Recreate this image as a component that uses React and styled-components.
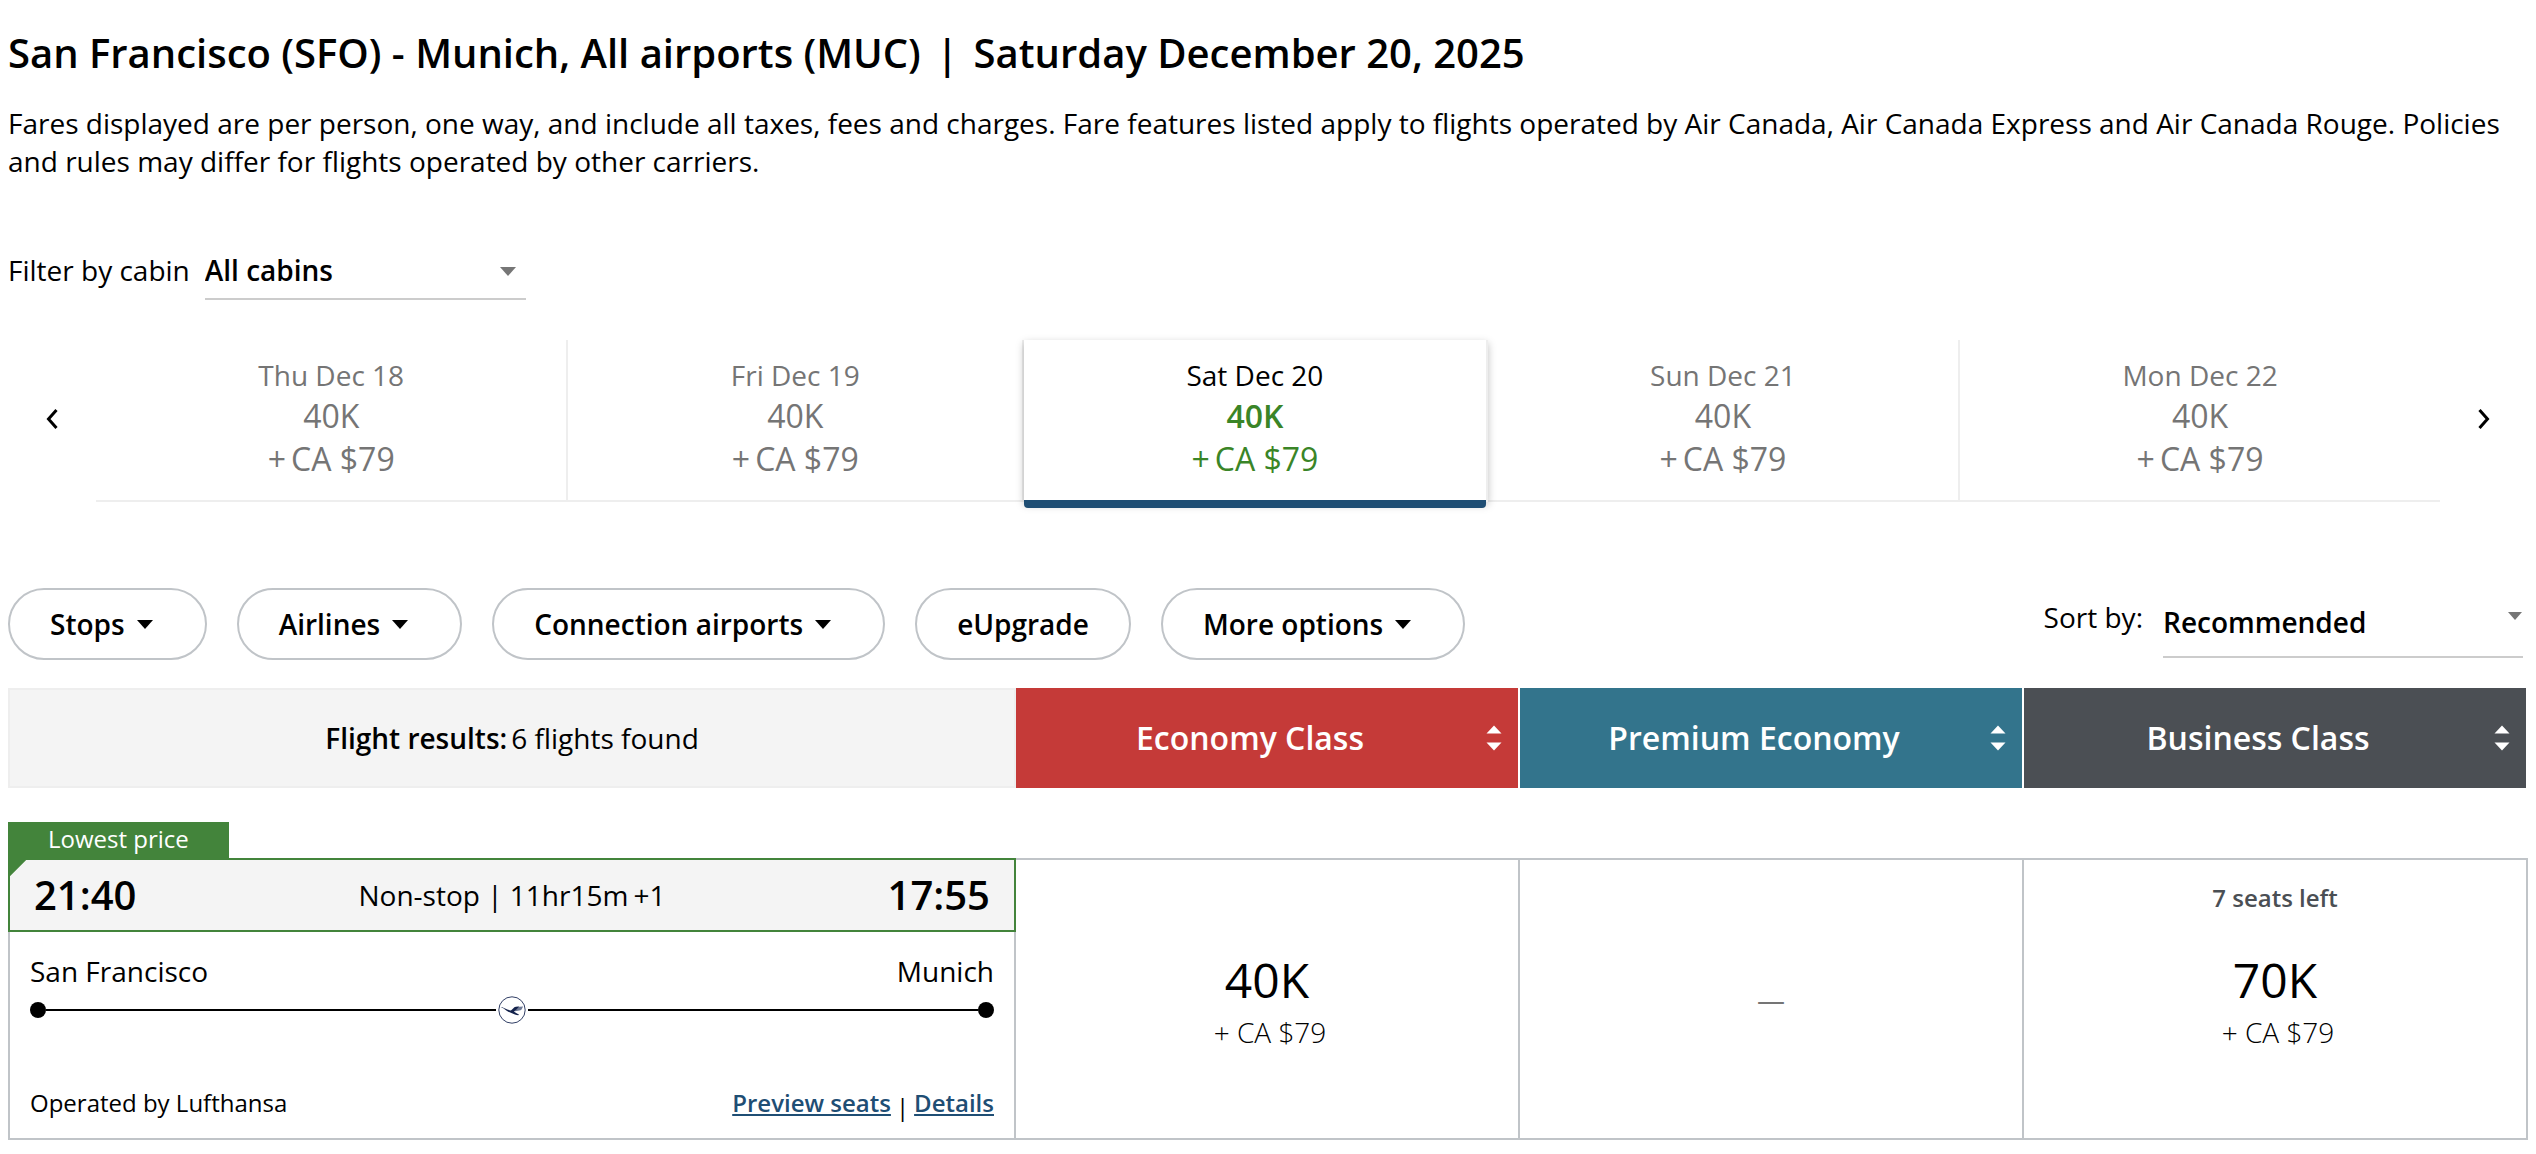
import { useState } from "react";
import styled, { createGlobalStyle } from "styled-components";

const dates = [
  { id: 18, label: "Thu Dec 18", points: "40K", cash: "CA $79" },
  { id: 19, label: "Fri Dec 19", points: "40K", cash: "CA $79" },
  { id: 20, label: "Sat Dec 20", points: "40K", cash: "CA $79" },
  { id: 21, label: "Sun Dec 21", points: "40K", cash: "CA $79" },
  { id: 22, label: "Mon Dec 22", points: "40K", cash: "CA $79" },
];

const filters = [
  { name: "Stops", menu: true },
  { name: "Airlines", menu: true },
  { name: "Connection airports", menu: true },
  { name: "eUpgrade", menu: false },
  { name: "More options", menu: true },
];

const cabins = [
  { name: "Economy Class", color: "#c53a38" },
  { name: "Premium Economy", color: "#33748c" },
  { name: "Business Class", color: "#4b4f54" },
];

const fares = [
  { cabin: "Economy Class", points: "40K", cash: "+ CA $79" },
  { cabin: "Premium Economy" },
  { cabin: "Business Class", points: "70K", cash: "+ CA $79", note: "7 seats left" },
];

const Caret = ({ color = "#000", width = 16, height = 9 }) => (
  <svg width={width} height={height} viewBox="0 0 16 8" preserveAspectRatio="none" aria-hidden="true">
    <path d="M0 0h16L8 8z" fill={color} />
  </svg>
);

const Chevron = ({ next }) => (
  <svg width="14" height="22" viewBox="0 0 14 22" aria-hidden="true">
    <path
      d={next ? "M2.500 2l8 9-8 9" : "M11.500 2l-8 9 8 9"}
      fill="none"
      stroke="#000"
      strokeWidth="3"
    />
  </svg>
);

const SortArrows = () => (
  <svg width="16" height="26" viewBox="0 0 16 26" aria-hidden="true">
    <path d="M0.500 8.500L8 0.500l7.500 8zM0.500 17.500L8 25.500l7.500-8z" fill="#fff" />
  </svg>
);

const CraneLogo = () => (
  <svg width="28" height="28" viewBox="0 0 28 28" role="img" aria-label="Lufthansa">
    <circle cx="14" cy="14" r="13.2" fill="#fff" stroke="#1b2a55" strokeWidth=".9" />
    <path d="M17.800 10.900l7.400-.4-.9 1.600-.5 1.100-1.200 1-5.300 1.100-2.500.3z" fill="#6f7a96" />
    <path
      d="M2.700 11.200c1.600-.2 2.700.4 3.800 1 2.200 1 4.300 2 6.400 2.300 1.700-1 2.700-3.400 4.900-3.800l3.400-.2-2.800 3-2.600 2.100c1.600 1 3 2.200 5 2.700l-.4.900c-2.400-.2-4.600-1.500-7-2.300-3-.4-5.300-2.800-8.100-4.600-.8-.5-1.600-.9-2.600-1.100z"
      fill="#14224b"
    />
  </svg>
);

const App = () => {
  const [cabin, setCabin] = useState("All cabins");
  const [sort, setSort] = useState("Recommended");
  const [selected, setSelected] = useState(20);

  return (
    <Page>
      <GlobalStyle />
      <Title>
        San Francisco (SFO) - Munich, All airports (MUC) <Divider>|</Divider> Saturday December 20, 2025
      </Title>
      <Notice>
        Fares displayed are per person, one way, and include all taxes, fees and charges. Fare features listed apply to
        flights operated by Air Canada, Air Canada Express and Air Canada Rouge. Policies and rules may differ for
        flights operated by other carriers.
      </Notice>

      <CabinFilter>
        <Label htmlFor="cabin">Filter by cabin</Label>
        <SelectBox $width="321px">
          <Select id="cabin" value={cabin} onChange={e => setCabin(e.target.value)}>
            <option>All cabins</option>
            <option>Economy</option>
            <option>Premium Economy</option>
            <option>Business</option>
          </Select>
          <SelectCaret $right="10px" $bottom="8px">
            <Caret color="#767676" />
          </SelectCaret>
        </SelectBox>
      </CabinFilter>

      <DateBar>
        <ArrowButton aria-label="Previous dates">
          <Chevron />
        </ArrowButton>
        <DateList>
          {dates.map(date => (
            <DateItem key={date.id} $active={date.id === selected}>
              <DateTab $active={date.id === selected} onClick={() => setSelected(date.id)}>
                <DateLabel>{date.label}</DateLabel>
                <DatePoints>{date.points}</DatePoints>
                <DateCash>
                  <span>+</span>
                  <span>{date.cash}</span>
                </DateCash>
              </DateTab>
            </DateItem>
          ))}
        </DateList>
        <ArrowButton aria-label="Next dates">
          <Chevron next />
        </ArrowButton>
      </DateBar>

      <Toolbar>
        <Pills>
          {filters.map(({ name, menu }) => (
            <Pill key={name}>
              {name}
              {menu && (
                <PillCaret>
                  <Caret />
                </PillCaret>
              )}
            </Pill>
          ))}
        </Pills>
        <SortBy>
          <SortLabel htmlFor="sort">Sort by:</SortLabel>
          <SelectBox $width="360px">
            <SortSelect id="sort" value={sort} onChange={e => setSort(e.target.value)}>
              <option>Recommended</option>
              <option>Lowest price</option>
              <option>Duration</option>
            </SortSelect>
            <SelectCaret $right="1px" $bottom="15px">
              <Caret color="#767676" width={14} height={8} />
            </SelectCaret>
          </SelectBox>
        </SortBy>
      </Toolbar>

      <ResultsHeader>
        <ResultsCount>
          <strong>Flight results:</strong>
          <span>6 flights found</span>
        </ResultsCount>
        {cabins.map(({ name, color }) => (
          <CabinHeader key={name} $color={color}>
            <CabinName>{name}</CabinName>
            <SortArrows />
          </CabinHeader>
        ))}
      </ResultsHeader>

      <Badge>Lowest price</Badge>
      <Flight>
        <Itinerary>
          <Times>
            <Time>21:40</Time>
            <Duration>
              <span>Non-stop | 11hr15m</span>
              <span>+1</span>
            </Duration>
            <Time>17:55</Time>
          </Times>
          <Route>
            <Cities>
              <span>San Francisco</span>
              <span>Munich</span>
            </Cities>
            <Track>
              <Dot />
              <Line />
              <LogoSlot>
                <CraneLogo />
              </LogoSlot>
              <Line />
              <Dot />
            </Track>
            <Operated>
              <span>Operated by Lufthansa</span>
              <Links>
                <Link href="#seats">Preview seats</Link>
                <span>|</span>
                <Link href="#details">Details</Link>
              </Links>
            </Operated>
          </Route>
        </Itinerary>
        {fares.map(fare => (
          <Fare key={fare.cabin} aria-label={fare.cabin} disabled={!fare.points}>
            <SeatsLeft>{fare.note}</SeatsLeft>
            {fare.points ? (
              <Price>
                <Points>{fare.points}</Points>
                <Cash>{fare.cash}</Cash>
              </Price>
            ) : (
              <NoFare>—</NoFare>
            )}
          </Fare>
        ))}
      </Flight>
    </Page>
  );
};

export default App;

const GlobalStyle = createGlobalStyle`
  * {
    box-sizing: border-box;
  }
  body {
    margin: 0;
    background: #fff;
    color: #000;
    font-family: "Open Sans", "Noto Sans", sans-serif;
    font-size: 28px;
    line-height: 38px;
  }
  button, select {
    margin: 0;
    padding: 0;
    border: 0;
    background: none;
    color: inherit;
    font: inherit;
  }
  button {
    cursor: pointer;
  }
  svg {
    display: block;
    flex: none;
  }
`;

const Page = styled.main`
  padding: 26px 8px 14px;
`;

const Title = styled.h1`
  margin: 0 0 24px;
  font-size: 40px;
  font-weight: 600;
  line-height: 54px;
`;

const Divider = styled.span`
  margin: 0 5px;
`;

const Notice = styled.p`
  margin: 0 0 70px;
`;

const CabinFilter = styled.div`
  display: flex;
  align-items: flex-start;
  gap: 15px;
  margin-bottom: 40px;
`;

const Label = styled.label`
  line-height: 40px;
`;

const SelectBox = styled.div`
  position: relative;
  width: ${({ $width }) => $width};
`;

const Select = styled.select`
  display: block;
  width: 100%;
  height: 50px;
  padding-bottom: 8px;
  border-bottom: 2px solid #ccc;
  border-radius: 0;
  appearance: none;
  font-weight: 600;
`;

const SelectCaret = styled.span`
  position: absolute;
  top: 0;
  bottom: ${({ $bottom }) => $bottom};
  right: ${({ $right }) => $right};
  display: flex;
  align-items: center;
  pointer-events: none;
`;

const DateBar = styled.nav`
  display: flex;
  align-items: flex-start;
  margin-bottom: 86px;
`;

const ArrowButton = styled.button`
  display: flex;
  flex: 0 0 88px;
  align-items: center;
  justify-content: center;
  height: 158px;
`;

const DateList = styled.div`
  display: flex;
  flex: 1;
  border-bottom: 2px solid #eee;
`;

const DateItem = styled.div`
  flex: 1 1 auto;
  border-right: 2px solid #eee;

  &:last-child {
    border-right: 0;
  }

  ${({ $active }) =>
    $active &&
    `
    margin-bottom: -2px;
    background: #fff;
    box-shadow: 0 3px 8px rgba(0, 0, 0, 0.25);
  `}
`;

const DateLabel = styled.div``;

const DatePoints = styled.div`
  font-size: 32px;
  line-height: 43px;
`;

const DateCash = styled.div`
  display: flex;
  justify-content: center;
  gap: 5px;
  font-size: 32px;
  line-height: 43px;
`;

const DateTab = styled.button`
  display: block;
  width: 100%;
  padding: 16px 0 20px;
  color: #757575;

  ${({ $active }) => $active && `
    margin-bottom: -6px;
    border-bottom: 8px solid #1f4e74;
    border-radius: 0 0 4px 4px;
    color: #3a8527;

    ${DateLabel} {
      color: #000;
    }
    ${DatePoints} {
      font-weight: 600;
    }
  `}
`;

const Toolbar = styled.div`
  display: flex;
  align-items: flex-start;
  justify-content: space-between;
  margin-bottom: 28px;
`;

const Pills = styled.div`
  display: flex;
  gap: 30px;
`;

const Pill = styled.button`
  display: flex;
  align-items: center;
  height: 72px;
  padding: 0 40px;
  border: 2px solid #c0c4c8;
  border-radius: 36px;
  font-weight: 600;
`;

const PillCaret = styled.span`
  margin: 0 12px;
`;

const SortBy = styled.div`
  display: flex;
  align-items: center;
  gap: 20px;
  margin-right: 5px;
`;

const SortLabel = styled.label`
  padding-bottom: 12px;
`;

const SortSelect = styled(Select)`
  height: 70px;
  padding-bottom: 0;
`;

const columns = `
  display: grid;
  grid-template-columns: 2fr 1fr 1fr 1fr;
`;

const ResultsHeader = styled.div`
  ${columns}
  height: 100px;
  margin-bottom: 34px;
`;

const ResultsCount = styled.div`
  display: flex;
  align-items: center;
  justify-content: center;
  gap: 4px;
  border: 2px solid #eee;
  background: #f4f4f4;

  strong {
    font-weight: 600;
  }
`;

const CabinHeader = styled.button`
  display: flex;
  align-items: center;
  padding: 0 16px 0 18px;
  border-right: 2px solid #fff;
  background: ${({ $color }) => $color};
  color: #fff;
  font-size: 32px;
  font-weight: 600;
`;

const CabinName = styled.span`
  flex: 1;
  padding-right: 20px;
`;

const Badge = styled.div`
  width: fit-content;
  height: 36px;
  padding: 0 40px;
  background: #43843b;
  color: #fff;
  font-size: 24px;
  line-height: 34px;
`;

const Flight = styled.article`
  ${columns}
`;

const Itinerary = styled.section`
  display: flex;
  flex-direction: column;
`;

const Times = styled.div`
  display: flex;
  align-items: center;
  justify-content: space-between;
  height: 74px;
  padding: 0 24px;
  border: 2px solid #43843b;
  background: linear-gradient(135deg, #43843b 11px, #f4f4f4 12px);
`;

const Time = styled.time`
  font-size: 40px;
  font-weight: 600;
`;

const Duration = styled.div`
  display: flex;
  gap: 5px;
`;

const Route = styled.div`
  padding: 20px 20px 14px;
  border: 2px solid #c0c4c8;
  border-top: 0;
`;

const Cities = styled.div`
  display: flex;
  justify-content: space-between;
`;

const Track = styled.div`
  display: flex;
  align-items: center;
  height: 32px;
  margin: 4px 0 60px;
`;

const Dot = styled.span`
  width: 16px;
  height: 16px;
  border-radius: 50%;
  background: #000;
`;

const Line = styled.span`
  flex: 1;
  height: 2px;
  background: #000;
`;

const LogoSlot = styled.span`
  padding: 0 2px;
`;

const Operated = styled.div`
  display: flex;
  align-items: flex-start;
  justify-content: space-between;
  font-size: 24px;
  line-height: 34px;
`;

const Links = styled.div`
  display: flex;
  align-items: flex-end;
  gap: 5px;
`;

const Link = styled.a`
  padding-bottom: 4px;
  color: #1f4e74;
  font-weight: 600;
`;

const Fare = styled.button`
  display: grid;
  grid-template-rows: 1fr auto 1fr;
  justify-items: center;
  border: 2px solid #c0c4c8;
  border-left: 0;
`;

const SeatsLeft = styled.span`
  padding-top: 20px;
  color: #4b4f54;
  font-size: 24px;
  font-weight: 600;
  line-height: 36px;
`;

const Price = styled.span`
  display: flex;
  flex-direction: column;
  align-items: center;
`;

const Points = styled.span`
  font-size: 48px;
  line-height: 66px;
`;

const Cash = styled.span`
  padding-left: 6px;
  font-weight: 300;
`;

const NoFare = styled.span`
  color: #757575;
`;
